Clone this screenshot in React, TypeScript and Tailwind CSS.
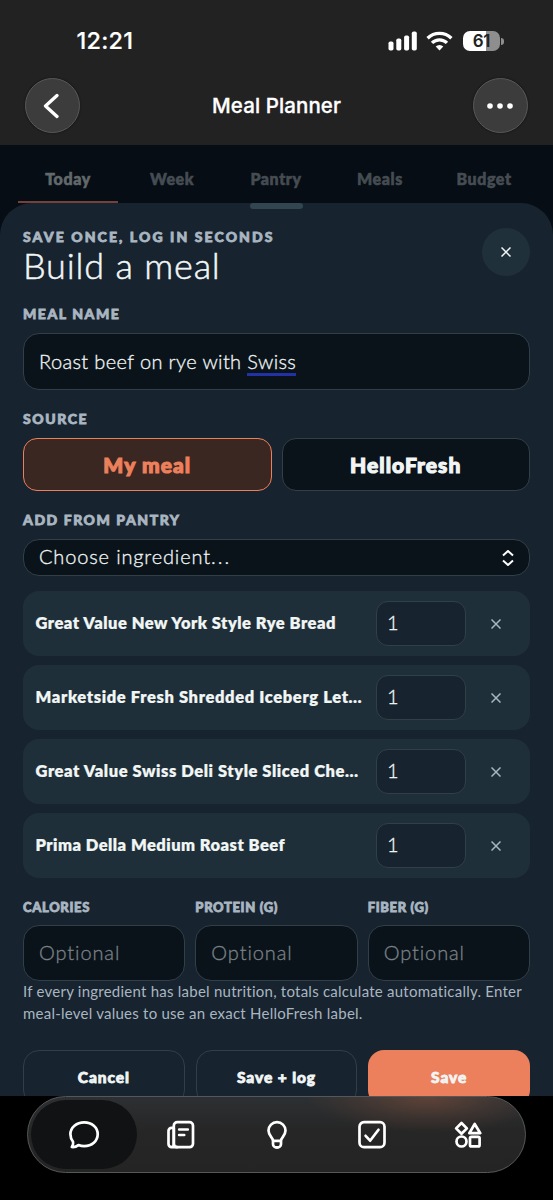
import React, { useState } from 'react';

const tabs = ['Today', 'Week', 'Pantry', 'Meals', 'Budget'];

const ingredients = [
  { name: 'Great Value New York Style Rye Bread', qty: 1, spacing: 'tracking-[0.5px]' },
  { name: 'Marketside Fresh Shredded Iceberg Let…', qty: 1, spacing: 'tracking-[0.63px]' },
  { name: 'Great Value Swiss Deli Style Sliced Che…', qty: 1, spacing: 'tracking-[0.57px]' },
  { name: 'Prima Della Medium Roast Beef', qty: 1, spacing: 'tracking-[0.47px]' },
];

const nutrition = ['Calories', 'Protein (g)', 'Fiber (g)'];

function StatusBar() {
  return (
    <div className="flex h-[82px] items-center justify-between pl-[76.500px] pr-[49px]">
      <span className="text-[23.5px] font-medium leading-none tracking-[0.2px] text-white [-webkit-text-stroke:0.2px]">12:21</span>
      <div className="flex items-center">
        <svg width="29" height="20" viewBox="0 0 29 20" fill="#fff">
          <rect x="0.5" y="10.5" width="5" height="9" rx="1.8" />
          <rect x="8.3" y="7.5" width="5" height="12" rx="1.8" />
          <rect x="16.1" y="4.5" width="5" height="15" rx="1.8" />
          <rect x="23.8" y="0.5" width="5" height="19" rx="1.8" />
        </svg>
        <svg className="ml-[9px]" width="27" height="20" viewBox="0 0 27 20" fill="none" stroke="#fff" strokeWidth="3.3">
          <path d="M1.6 7.3a17 17 0 0 1 23.8 0" />
          <path d="M6 11.9a10.7 10.7 0 0 1 15 0" />
          <path d="M13.5 19.4l-3.8-3.9a5.5 5.5 0 0 1 7.6 0z" fill="#fff" stroke="none" />
        </svg>
        <div className="ml-2.5 flex h-5 w-[37px] items-center justify-center rounded-[7px] bg-[linear-gradient(90deg,#fff_62%,#8e8e8e_62%)]">
          <span className="text-[17px] font-semibold leading-none tracking-[-0.2px] text-[#222]">61</span>
        </div>
        <div className="ml-px h-[7px] w-[3px] rounded-r-full bg-[#8e8e8e]" />
      </div>
    </div>
  );
}

function RoundButton({ children }: { children: React.ReactNode }) {
  return (
    <button className="flex h-[55px] w-[55px] items-center justify-center rounded-full border border-[#5a5a5a] bg-[#3c3c3c] shadow-[0_0_2px_#111]">
      {children}
    </button>
  );
}

function Cross({ size, color }: { size: number; color: string }) {
  return (
    <svg width={size} height={size} viewBox="0 0 10 10" fill="none" stroke={color} strokeWidth="1.5">
      <path d="M0.5 0.5l9 9M9.5 0.5l-9 9" />
    </svg>
  );
}

function Label({ children }: { children: React.ReactNode }) {
  return (
    <div className="text-[14px] font-black uppercase leading-5 tracking-[1.55px] text-[#a9b6c1] [-webkit-text-stroke:0.8px]">
      {children}
    </div>
  );
}

function BottomBar() {
  const icon = {
    width: 32,
    height: 32,
    viewBox: '0 0 32 32',
    fill: 'none',
    stroke: '#fff',
    strokeWidth: 2.7,
    strokeLinecap: 'round' as const,
    strokeLinejoin: 'round' as const,
  };

  return (
    <div className="relative ml-[27px] flex h-[77px] w-[499px] overflow-hidden rounded-full border border-[#555859] bg-[linear-gradient(180deg,#2d3033_0%,#262626_45%,#242424_100%)] p-[3px]">
      {/* Glow of the save button under the glass */}
      <div className="absolute left-[280px] top-[-36px] h-[72px] w-[240px] bg-[radial-gradient(closest-side,#80503b99_0%,#80503b33_60%,transparent_100%)]" />
      <div className="flex h-[69px] w-[106px] items-center justify-center rounded-full bg-[#111214]">
        <svg {...icon}>
          <path d="M16.2 3.400C8.600 3.400 2.400 8.600 2.400 15.300c0 2.900 1 5.300 2.600 7.400.6 1.900-.1 3.800-1.200 5.300 2.500.3 4.800-.5 6.600-1.900 1.800.7 3.800 1.100 5.800 1.100 7.700 0 13.500-5.100 13.500-11.900S23.900 3.400 16.200 3.400z" />
        </svg>
      </div>
      <div className="relative flex flex-1 items-center justify-between pl-[28px] pr-[38px]">
        <svg {...icon}>
          <rect x="8.8" y="3.200" width="19.200" height="25" rx="3.500" />
          <path d="M8.800 8.900H6.500a3 3 0 0 0-3 3v13.200a3.100 3.100 0 0 0 3.100 3.100H12M8.800 9v16.100c0 1.800-.8 3.100-2.300 3.100M14.200 10.500h8.600M14.200 16h5" />
        </svg>
        <svg {...icon}>
          <path d="M12 21.900c0-3.600-4.500-5-4.500-10.300a8.500 8.500 0 0 1 17 0c0 5.300-4.500 6.700-4.500 10.300M12 21.900h8M12 21.900v3a4 3.800 0 0 0 8 0v-3M14.500 28.400h3" />
        </svg>
        <svg {...icon}>
          <rect x="3.500" y="3.200" width="25" height="25" rx="4.500" />
          <path d="M9.600 16.800l4.500 4.900 8.400-11" />
        </svg>
        <svg {...icon}>
          <path d="M9.500 4l5.400 5.400-5.400 5.400-5.400-5.400zM22.700 5l5.600 9.200H17.300z" />
          <circle cx="9.500" cy="22.500" r="5" />
          <rect x="18" y="17.800" width="9.600" height="9.600" rx="1.500" />
        </svg>
      </div>
    </div>
  );
}

export default function App() {
  const [activeTab, setActiveTab] = useState('Today');
  const [source, setSource] = useState('My meal');

  return (
    <div className="flex h-[1200px] w-[553px] flex-col overflow-hidden bg-black font-['Lato',sans-serif]">
      {/* Header */}
      <header className="h-[145px] shrink-0 bg-[#222222] font-['Inter',sans-serif]">
        <StatusBar />
        <div className="-mt-1 flex items-center justify-between px-[25px]">
          <RoundButton>
            <svg className="-ml-1" width="16" height="26" viewBox="0 0 16 26" fill="none" stroke="#fff" strokeWidth="3.3" strokeLinecap="round" strokeLinejoin="round">
              <path d="M14 2.500L2.500 13 14 23.500" />
            </svg>
          </RoundButton>
          <h1 className="pt-0.5 text-[20.500px] font-medium tracking-[0.1px] text-white [-webkit-text-stroke:0.3px]">Meal Planner</h1>
          <RoundButton>
            <svg width="26" height="6" viewBox="0 0 26 6" fill="#fff">
              <circle cx="3" cy="3" r="2.800" />
              <circle cx="13" cy="3" r="2.800" />
              <circle cx="23" cy="3" r="2.800" />
            </svg>
          </RoundButton>
        </div>
      </header>

      {/* Dimmed page behind the sheet */}
      <nav className="flex h-[58px] shrink-0 bg-[#060d14] px-4">
        {tabs.map((tab) => (
          <button
            key={tab}
            onClick={() => setActiveTab(tab)}
            className={`mx-0.5 w-[100px] border-b-2 pt-3 text-[16px] font-black tracking-[0.6px] [-webkit-text-stroke:0.6px] ${
              activeTab === tab ? 'border-[#75423b] text-[#62686b]' : 'border-transparent text-[#454c52]'
            }`}
          >
            {tab}
          </button>
        ))}
      </nav>

      {/* Build a meal sheet */}
      <div className="h-[893px] shrink-0 overflow-hidden bg-[#060d14]">
        <main className="h-full rounded-t-[32px] bg-[#17232e] px-[23px]">
          <div className="mx-auto h-1.5 w-[53px] rounded-[3px] bg-[#314650]" />

          <div className="flex h-[77px] justify-between pt-[18px]">
            <div>
              <div className="text-[14px] font-black uppercase leading-5 tracking-[2.1px] text-[#a9b6c1] [-webkit-text-stroke:0.8px]">
                Save once, log in seconds
              </div>
              <h2 className="-mt-px text-[36px] font-light leading-[38px] tracking-[0.8px] text-[#f1f6f5] [-webkit-text-stroke:0.5px]">
                Build a meal
              </h2>
            </div>
            <button className="mt-px flex h-12 w-12 items-center justify-center rounded-full bg-[#1f303a]">
              <Cross size={10} color="#f1f6f5" />
            </button>
          </div>

          <div className="mt-[18px]">
            <Label>Meal name</Label>
            <div className="mt-[9px] flex h-[57px] items-center rounded-[16px] border border-[#313f49] bg-[#0a131a] px-[15px] pb-0.5 text-[20px] font-light tracking-[0.37px] text-[#f1f6f5] [-webkit-text-stroke:0.3px]">
              <span>
                Roast beef on rye with <span className="border-b-[3px] border-[#2331a8] leading-none">Swiss</span>
              </span>
            </div>
          </div>

          <div className="mt-[19px]">
            <Label>Source</Label>
            <div className="mt-[9px] grid grid-cols-2 gap-2.5">
              {['My meal', 'HelloFresh'].map((item) => (
                <button
                  key={item}
                  onClick={() => setSource(item)}
                  className={`h-[53px] rounded-[14px] border text-[21px] font-black tracking-[1.05px] [-webkit-text-stroke:1.1px] ${
                    source === item
                      ? 'border-[#ed805c] bg-[#3b2722] text-[#ed805c]'
                      : 'border-[#313f49] bg-[#0a131a] text-[#f1f6f5]'
                  }`}
                >
                  {item}
                </button>
              ))}
            </div>
          </div>

          <div className="mt-[19px]">
            <Label>Add from pantry</Label>
            <div className="mt-[9px] flex h-[37px] items-center justify-between rounded-[16px] border border-[#313f49] bg-[#0a131a] px-[15px] text-[20px] font-light tracking-[0.85px] text-[#f1f6f5]">
              <span className="pb-[3px] [-webkit-text-stroke:0.3px]">
                Choose ingredient<span className="tracking-[2.200px]">...</span>
              </span>
              <svg width="12" height="16" viewBox="0 0 12 16" fill="none" stroke="#fff" strokeWidth="2">
                <path d="M1 5.500l5-4.500 5 4.500M1 10.500l5 4.500 5-4.500" />
              </svg>
            </div>
          </div>

          {/* Ingredients */}
          <div className="mt-[15px] space-y-[9px]">
            {ingredients.map((item) => (
              <div key={item.name} className="flex h-[65px] items-center rounded-[16px] bg-[#1f2f39] pl-[12.500px]">
                <div
                  className={`w-[340.500px] whitespace-nowrap text-[16.500px] font-extrabold text-[#f1f6f5] [-webkit-text-stroke:0.2px] ${item.spacing}`}
                >
                  {item.name}
                </div>
                <div className="flex h-[45px] w-[90px] items-center rounded-[12px] border border-[#313f49] bg-[#17232e] px-2.5 pb-[3px] text-[20px] font-light text-[#f1f6f5] [-webkit-text-stroke:0.3px]">
                  {item.qty}
                </div>
                <button className="flex h-10 w-[60px] items-center justify-center">
                  <Cross size={10} color="#a9b6c1" />
                </button>
              </div>
            ))}
          </div>

          {/* Nutrition */}
          <div className="mt-[19px] grid grid-cols-3 gap-2.5">
            {nutrition.map((label) => (
              <div key={label}>
                <div className="text-[13px] font-black uppercase leading-5 tracking-[0.65px] text-[#a9b6c1] [-webkit-text-stroke:0.8px]">
                  {label}
                </div>
                <div className="mt-2 flex h-[56px] items-center rounded-[16px] border border-[#313f49] bg-[#0a131a] px-[15px] pb-0.5 text-[20px] font-light tracking-[0.9px] text-[#7b8186] [-webkit-text-stroke:0.3px]">
                  Optional
                </div>
              </div>
            ))}
          </div>
          <p className="whitespace-nowrap text-[15px] leading-[21.500px] tracking-[0.24px] text-[#a9b6c1]">
            If every ingredient has label nutrition, totals calculate automatically. Enter
            <br />
            meal-level values to use an exact HelloFresh label.
          </p>

          <div className="mt-[26px] grid grid-cols-3 gap-[11px] text-[15.500px] font-black tracking-[0.9px] text-[#f1f6f5] [-webkit-text-stroke:0.8px]">
            <button className="h-14 rounded-[16px] border border-[#313f49]">Cancel</button>
            <button className="h-14 rounded-[16px] border border-[#313f49]">Save + log</button>
            <button className="h-14 rounded-[16px] bg-[#ed805c]">Save</button>
          </div>
        </main>
      </div>

      <BottomBar />
    </div>
  );
}
